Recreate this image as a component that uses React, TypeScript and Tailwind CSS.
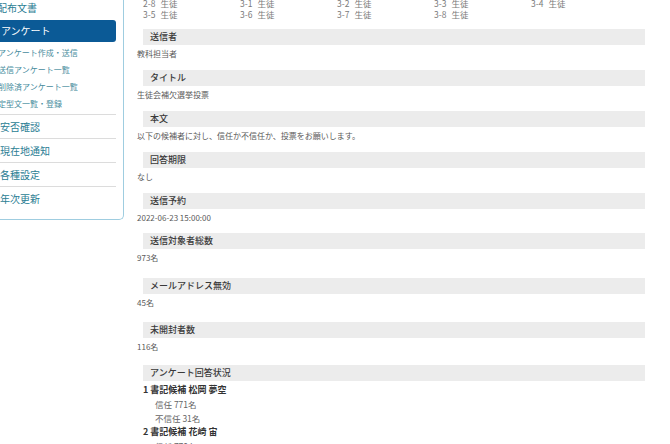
import React from 'react';

const classRows = [
  ['2-8', '3-1', '3-2', '3-3', '3-4'],
  ['3-5', '3-6', '3-7', '3-8'],
];

const subMenu = ['アンケート作成・送信', '送信アンケート一覧', '削除済アンケート一覧', '定型文一覧・登録'];
const mainMenu = ['安否確認', '現在地通知', '各種設定', '年次更新'];

const details = [
  { label: '送信者', value: '教科担当者', gap: 'mb-[7px]' },
  { label: 'タイトル', value: '生徒会補欠選挙投票', gap: 'mb-[7px]' },
  { label: '本文', value: '以下の候補者に対し、信任か不信任か、投票をお願いします。', gap: 'mb-[7px]' },
  { label: '回答期限', value: 'なし', gap: 'mb-[7px]' },
  { label: '送信予約', value: '2022-06-23 15:00:00', gap: 'mb-[6px]' },
  { label: '送信対象者総数', value: '973名', gap: 'mb-[11px]' },
  { label: 'メールアドレス無効', value: '45名', gap: 'mb-[10px]' },
  { label: '未開封者数', value: '116名', gap: 'mb-[9px]' },
];

const candidates = [
  { no: 1, name: '書記候補 松岡 夢空', yes: '771名', no2: '31名' },
  { no: 2, name: '書記候補 花崎 宙', yes: '770名', no2: '32名' },
];

const SectionBar = ({ label }: { label: string }) => (
  <div className="ml-[6px] h-[16px] bg-[#ececec] pl-[7px] text-[9px] font-medium leading-[16px] text-[#3a3a3a]">
    {label}
  </div>
);

const Sidebar = () => (
  <div className="ml-[-6px] mt-[-4px] w-[130px] self-start rounded-br-[5px] border-r border-b border-[#9fcde0] pr-[7px] pb-[8px]">
    <div className="h-[24px] pl-[3px] text-[10px] leading-[24px] text-[#2a7d93]">配布文書</div>
    <div className="h-[22px] rounded-[3px] bg-[#0b5a96] pl-[7px] text-[10px] leading-[22px] text-white">アンケート</div>
    <div className="mt-[2px] border-b border-[#dcdcdc] pb-[2px]">
      {subMenu.map((item) => (
        <div key={item} className="h-[17px] pl-[4px] text-[8px] leading-[17px] text-[#478c9d]">
          {item}
        </div>
      ))}
    </div>
    {mainMenu.map((item, i) => (
      <div
        key={item}
        className={
          i < mainMenu.length - 1
            ? 'h-[24px] border-b border-[#dcdcdc] pl-[6px] text-[10px] leading-[24px] text-[#2a7d93]'
            : 'h-[24px] pl-[6px] text-[10px] leading-[24px] text-[#2a7d93]'
        }
      >
        {item}
      </div>
    ))}
  </div>
);

export default function App() {
  return (
    <div className="flex h-[444px] w-[670px] overflow-hidden bg-white font-['Noto_Sans_CJK_JP',sans-serif]">
      <Sidebar />
      <div className="ml-[13px] w-[508px]">
        <div className="mt-[-2px] ml-[6px] mb-[9px]">
          {classRows.map((row, r) => (
            <div key={r} className="flex h-[11px] text-[8.5px] leading-[11px] text-[#7a7a7a]">
              {row.map((c) => (
                <div key={c} className="w-[97px]">
                  <span className="mr-[5px]">{c}</span>生徒
                </div>
              ))}
            </div>
          ))}
        </div>

        {details.map((d) => (
          <div key={d.label} className={d.gap}>
            <SectionBar label={d.label} />
            <div className="h-[18px] text-[8px] leading-[18px] text-[#5a5a5a]">{d.value}</div>
          </div>
        ))}

        <SectionBar label="アンケート回答状況" />
        <div className="mt-[2px] ml-[6px] text-[9px] leading-[14px]">
          {candidates.map((c) => (
            <div key={c.no}>
              <div className="font-semibold text-[#333]">
                {c.no} {c.name}
              </div>
              <div className="pl-[12px] text-[8.5px] text-[#666]">
                信任 {c.yes}
              </div>
              <div className="pl-[12px] text-[8.5px] text-[#666]">
                不信任 {c.no2}
              </div>
            </div>
          ))}
        </div>
      </div>
    </div>
  );
}
